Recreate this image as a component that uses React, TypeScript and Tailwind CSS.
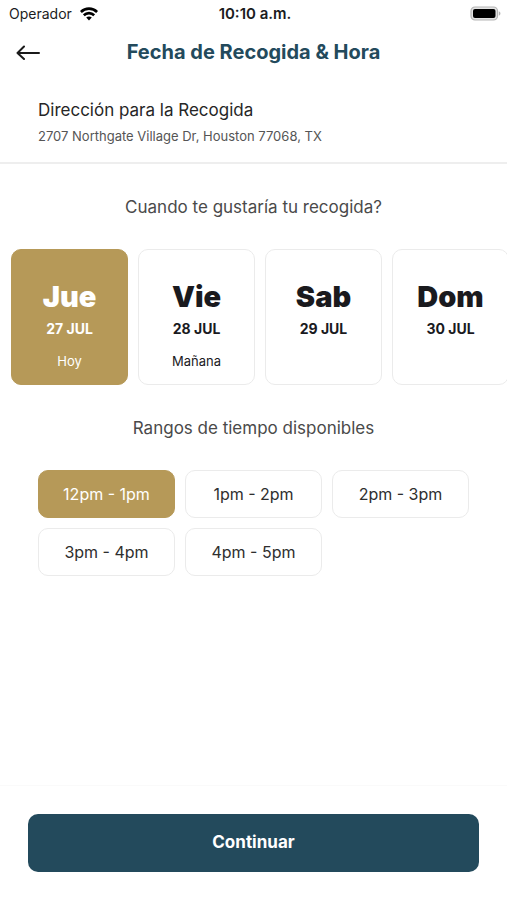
import { useState } from "react";
import clsx from "clsx";

const days = [
  { id: "27", name: "Jue", date: "27 JUL", note: "Hoy" },
  { id: "28", name: "Vie", date: "28 JUL", note: "Mañana" },
  { id: "29", name: "Sab", date: "29 JUL", note: "" },
  { id: "30", name: "Dom", date: "30 JUL", note: "" },
];

const timeRanges = ["12pm - 1pm", "1pm - 2pm", "2pm - 3pm", "3pm - 4pm", "4pm - 5pm"];

function StatusBar() {
  return (
    <div className="grid h-7 grid-cols-3 items-center pl-[9px] pr-[6px] text-sm text-[#1c1c1e]">
      <div className="flex items-center gap-2">
        <span>Operador</span>
        <svg width="18" height="14" viewBox="0 0 18 14" fill="none" stroke="#000" strokeWidth="2.6" aria-hidden="true">
          <path d="M.9 5C5.4 .5 12.6 .5 17.1 5" />
          <path d="M3.8 8.3C6.8 5.4 11.2 5.4 14.2 8.3" />
          <path d="M9 13.4 6.2 10.6C7.7 9.1 10.3 9.1 11.8 10.6Z" fill="#000" stroke="none" />
        </svg>
      </div>
      <span className="text-center text-[15px] font-semibold">10:10 a.m.</span>
      <svg className="justify-self-end" width="31" height="16" viewBox="0 0 31 16" aria-hidden="true">
        <rect x="1" y="1" width="26.5" height="13" rx="4" fill="#e4e4e4" stroke="#b5b5b5" strokeWidth="1.2" />
        <rect x="3" y="3" width="22.5" height="9" rx="2" fill="#000" />
        <path d="M28.8 5.3C31 6.1 31 8.9 28.8 9.7Z" fill="#b5b5b5" />
      </svg>
    </div>
  );
}

export default function App() {
  const [selectedDay, setSelectedDay] = useState("27");
  const [selectedRange, setSelectedRange] = useState("12pm - 1pm");

  return (
    <div className="flex min-h-screen w-full flex-col overflow-x-hidden bg-white font-['Inter',sans-serif]">
      <StatusBar />

      {/* === Header === */}
      <header className="grid h-12 grid-cols-[40px_1fr_40px] items-center px-2">
        <button type="button" aria-label="Volver" className="flex h-10 items-center justify-center">
          <svg width="24" height="16" viewBox="0 0 24 16" fill="none" stroke="#1a1a1a" strokeWidth="2" strokeLinecap="round" strokeLinejoin="round" aria-hidden="true">
            <path d="M23 9H1.5M8 2.5 1.5 9 8 15" />
          </svg>
        </button>
        <h1 className="text-center text-xl font-bold text-[#234a5c]">Fecha de Recogida & Hora</h1>
      </header>

      {/* === Address === */}
      <section className="border-b-2 border-[#eeeeee] px-[38px] pb-3.5 pt-5">
        <h2 className="text-[17px] leading-7 text-[#262626]">Dirección para la Recogida</h2>
        <p className="text-[13px] leading-6 text-[#555555]">2707 Northgate Village Dr, Houston 77068, TX</p>
      </section>

      {/* === Day picker === */}
      <section className="pt-[29px]">
        <h2 className="text-center text-[17px] leading-7 text-[#4a4a4a]">Cuando te gustaría tu recogida?</h2>
        <div className="mt-7 flex gap-[10px] overflow-hidden pl-[11px]">
          {days.map((day) => (
            <button
              key={day.id}
              type="button"
              aria-pressed={day.id === selectedDay}
              onClick={() => setSelectedDay(day.id)}
              className={clsx(
                "flex h-[136px] w-[117px] shrink-0 flex-col items-center rounded-[10px] border pt-[27px]",
                day.id === selectedDay
                  ? "border-[#b69958] bg-[#b69958] text-white"
                  : "border-[#ebebeb] bg-white text-[#1a1a1e]"
              )}
            >
              <span className="text-[29px] font-black leading-10">{day.name}</span>
              <span className="text-sm font-bold leading-6">{day.date}</span>
              <span className="mt-2 text-[13px] leading-6">{day.note}</span>
            </button>
          ))}
        </div>
      </section>

      {/* === Time ranges === */}
      <section className="px-[38px] pt-[29px]">
        <h2 className="text-center text-[17px] leading-7 text-[#4a4a4a]">Rangos de tiempo disponibles</h2>
        <div className="mt-7 grid grid-cols-3 gap-[10px]">
          {timeRanges.map((range) => (
            <button
              key={range}
              type="button"
              aria-pressed={range === selectedRange}
              onClick={() => setSelectedRange(range)}
              className={clsx(
                "h-12 rounded-[10px] border text-base",
                range === selectedRange
                  ? "border-[#b69958] bg-[#b69958] text-white"
                  : "border-[#ebebeb] bg-white text-[#2e2e2e]"
              )}
            >
              {range}
            </button>
          ))}
        </div>
      </section>

      {/* === Footer === */}
      <footer className="mt-auto border-t border-[#fafafa] px-7 py-7">
        <button type="button" className="h-[58px] w-full rounded-[10px] bg-[#234a5c] text-[17px] font-bold text-white">
          Continuar
        </button>
      </footer>
    </div>
  );
}
